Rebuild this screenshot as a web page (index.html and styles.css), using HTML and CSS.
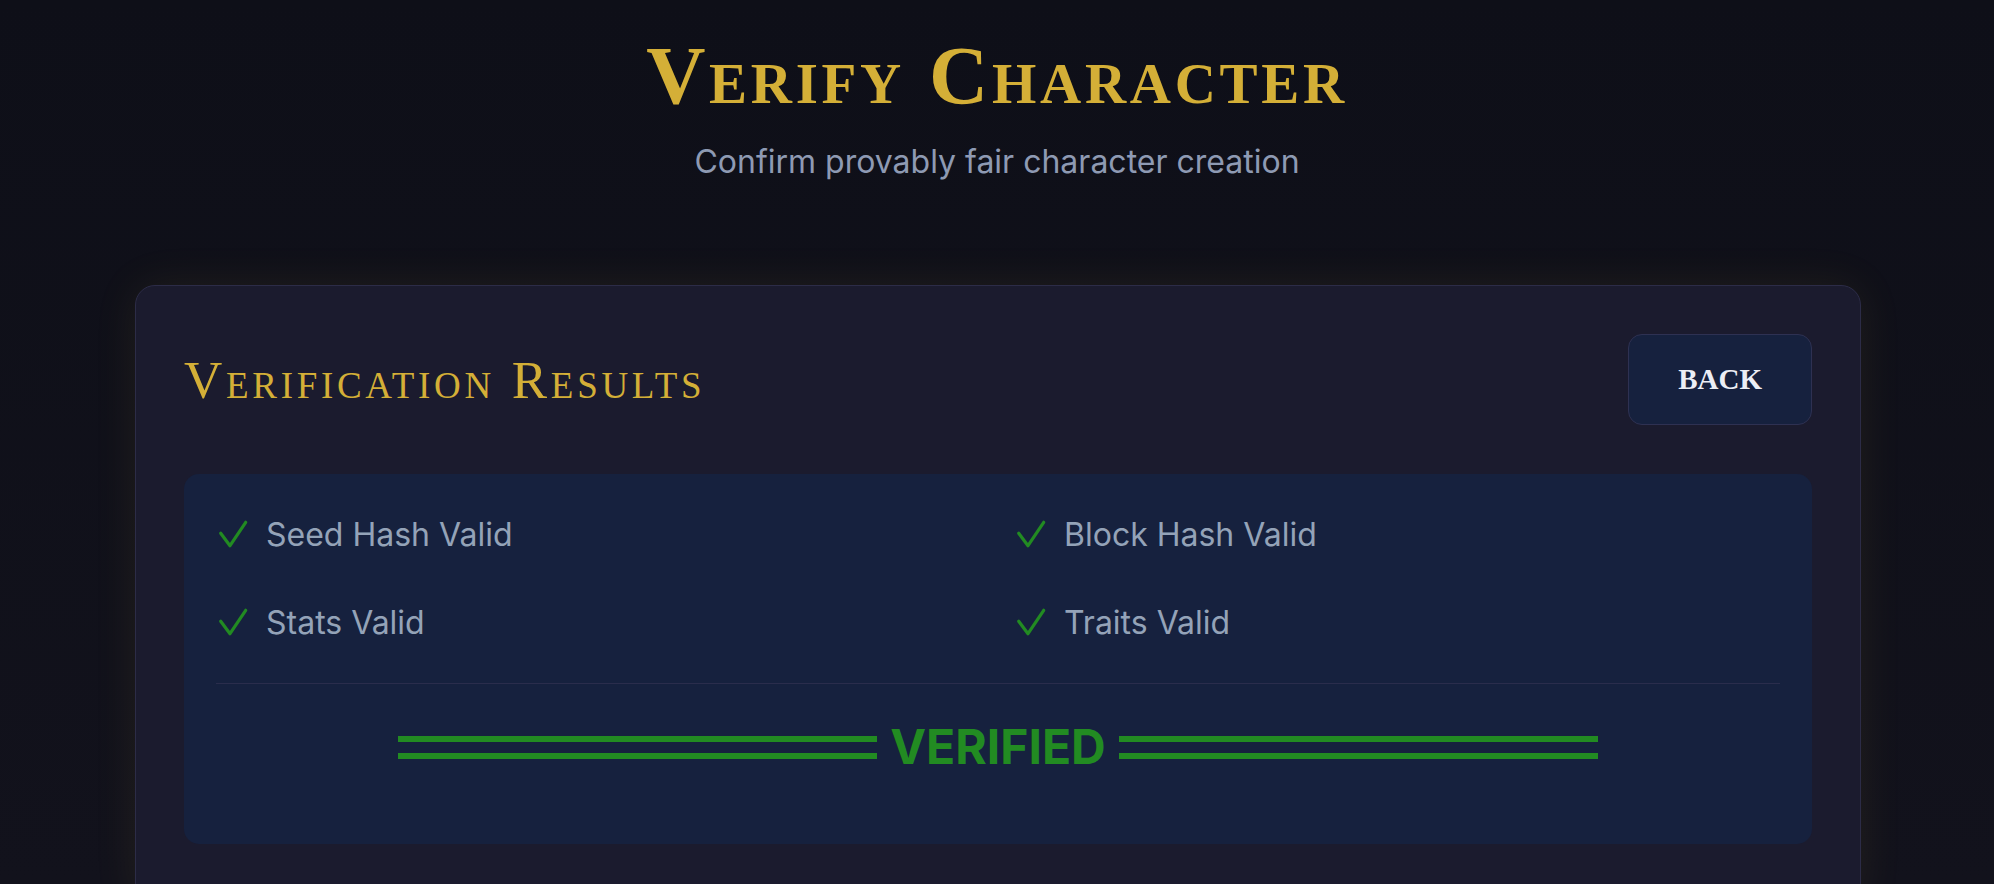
FILE: index.html
```html
<!DOCTYPE html>
<html lang="en">
<head>
    <meta charset="UTF-8">
    <meta name="viewport" content="width=device-width, initial-scale=1.0">
    <title>Verify Character</title>
    <link rel="stylesheet" href="styles.css">
</head>
<body>
    <div class="page">
        <header class="page-header">
            <h1 class="page-title">Verify Character</h1>
            <p class="page-subtitle">Confirm provably fair character creation</p>
        </header>

        <section class="card">
            <div class="card-header">
                <h2 class="card-title">Verification Results</h2>
                <button class="back-button">Back</button>
            </div>

            <div class="results">
                <div class="checks">
                    <div class="check-item">
                        <svg class="check-icon" viewBox="0 0 32 32"><polyline points="4.7,15.3 14,27.7 29.7,4.3"/></svg>
                        <span>Seed Hash Valid</span>
                    </div>
                    <div class="check-item">
                        <svg class="check-icon" viewBox="0 0 32 32"><polyline points="4.7,15.3 14,27.7 29.7,4.3"/></svg>
                        <span>Block Hash Valid</span>
                    </div>
                    <div class="check-item">
                        <svg class="check-icon" viewBox="0 0 32 32"><polyline points="4.7,15.3 14,27.7 29.7,4.3"/></svg>
                        <span>Stats Valid</span>
                    </div>
                    <div class="check-item">
                        <svg class="check-icon" viewBox="0 0 32 32"><polyline points="4.7,15.3 14,27.7 29.7,4.3"/></svg>
                        <span>Traits Valid</span>
                    </div>
                </div>

                <div class="status">
                    <div class="status-inner">
                        <span class="status-line"></span>
                        <span class="status-text">VERIFIED</span>
                        <span class="status-line"></span>
                    </div>
                </div>
            </div>
        </section>
    </div>
</body>
</html>
```

FILE: styles.css
```css
* {
    margin: 0;
    padding: 0;
    box-sizing: border-box;
}
html, body {
    height: 100%;
    overflow: hidden;
}
body {
    font-family: Inter, "Noto Sans", sans-serif;
    background: linear-gradient(180deg, #0e0f18 0%, #12121c 100%);
    color: #94a3b8;
}
.page {
    padding-top: 27px;
}
.page-header {
    text-align: center;
    margin-bottom: 101px;
}
.page-title {
    font-family: "Liberation Serif", serif;
    font-variant: small-caps;
    font-weight: bold;
    font-size: 82px;
    line-height: 98px;
    color: #d4af37;
    letter-spacing: 3.7px;
}
.page-subtitle {
    margin-top: 15px;
    font-size: 32px;
    line-height: 44px;
    color: #8e9ab3;
}

.card {
    margin: 0 133px 0 135px;
    padding: 48px 48px 60px;
    background: #1b1b2e;
    border: 1px solid #2c2c47;
    border-radius: 20px;
    box-shadow: 0 0 45px rgba(212, 175, 55, 0.09);
}
.card-header {
    display: flex;
    justify-content: space-between;
    align-items: center;
}
.card-title {
    font-family: "Liberation Serif", serif;
    font-variant: small-caps;
    font-weight: normal;
    font-size: 53px;
    line-height: 64px;
    color: #d4af37;
    letter-spacing: 3.7px;
}
.back-button {
    font-family: "Liberation Serif", serif;
    font-weight: bold;
    font-size: 29px;
    line-height: 35px;
    text-transform: uppercase;
    color: #eceef5;
    background: #16213e;
    border: 1px solid #2e3152;
    border-radius: 14px;
    padding: 27px 49px;
    cursor: pointer;
}

.results {
    margin-top: 49px;
    padding: 32px 32px 0;
    background: #16213e;
    border-radius: 15px;
}
.checks {
    display: grid;
    grid-template-columns: 1fr 1fr;
    gap: 32px;
}
.check-item {
    display: flex;
    align-items: center;
    gap: 18px;
    height: 56px;
    font-size: 32px;
    color: #94a3b8;
}
.check-icon {
    width: 32px;
    height: 32px;
    fill: none;
    stroke: #228b22;
    stroke-width: 3.2;
    stroke-linecap: round;
    stroke-linejoin: round;
}

.status {
    margin-top: 33px;
    border-top: 1px solid #2a2d4c;
    padding: 34px 0 68px;
}
.status-inner {
    display: flex;
    align-items: center;
    gap: 13px;
    max-width: 1200px;
    margin: 0 auto;
}
.status-line {
    flex: 1;
    height: 23px;
    border-top: 6px solid #228b22;
    border-bottom: 6px solid #228b22;
}
.status-text {
    font-size: 48px;
    font-weight: bold;
    line-height: 58px;
    color: #228b22;
}
```
